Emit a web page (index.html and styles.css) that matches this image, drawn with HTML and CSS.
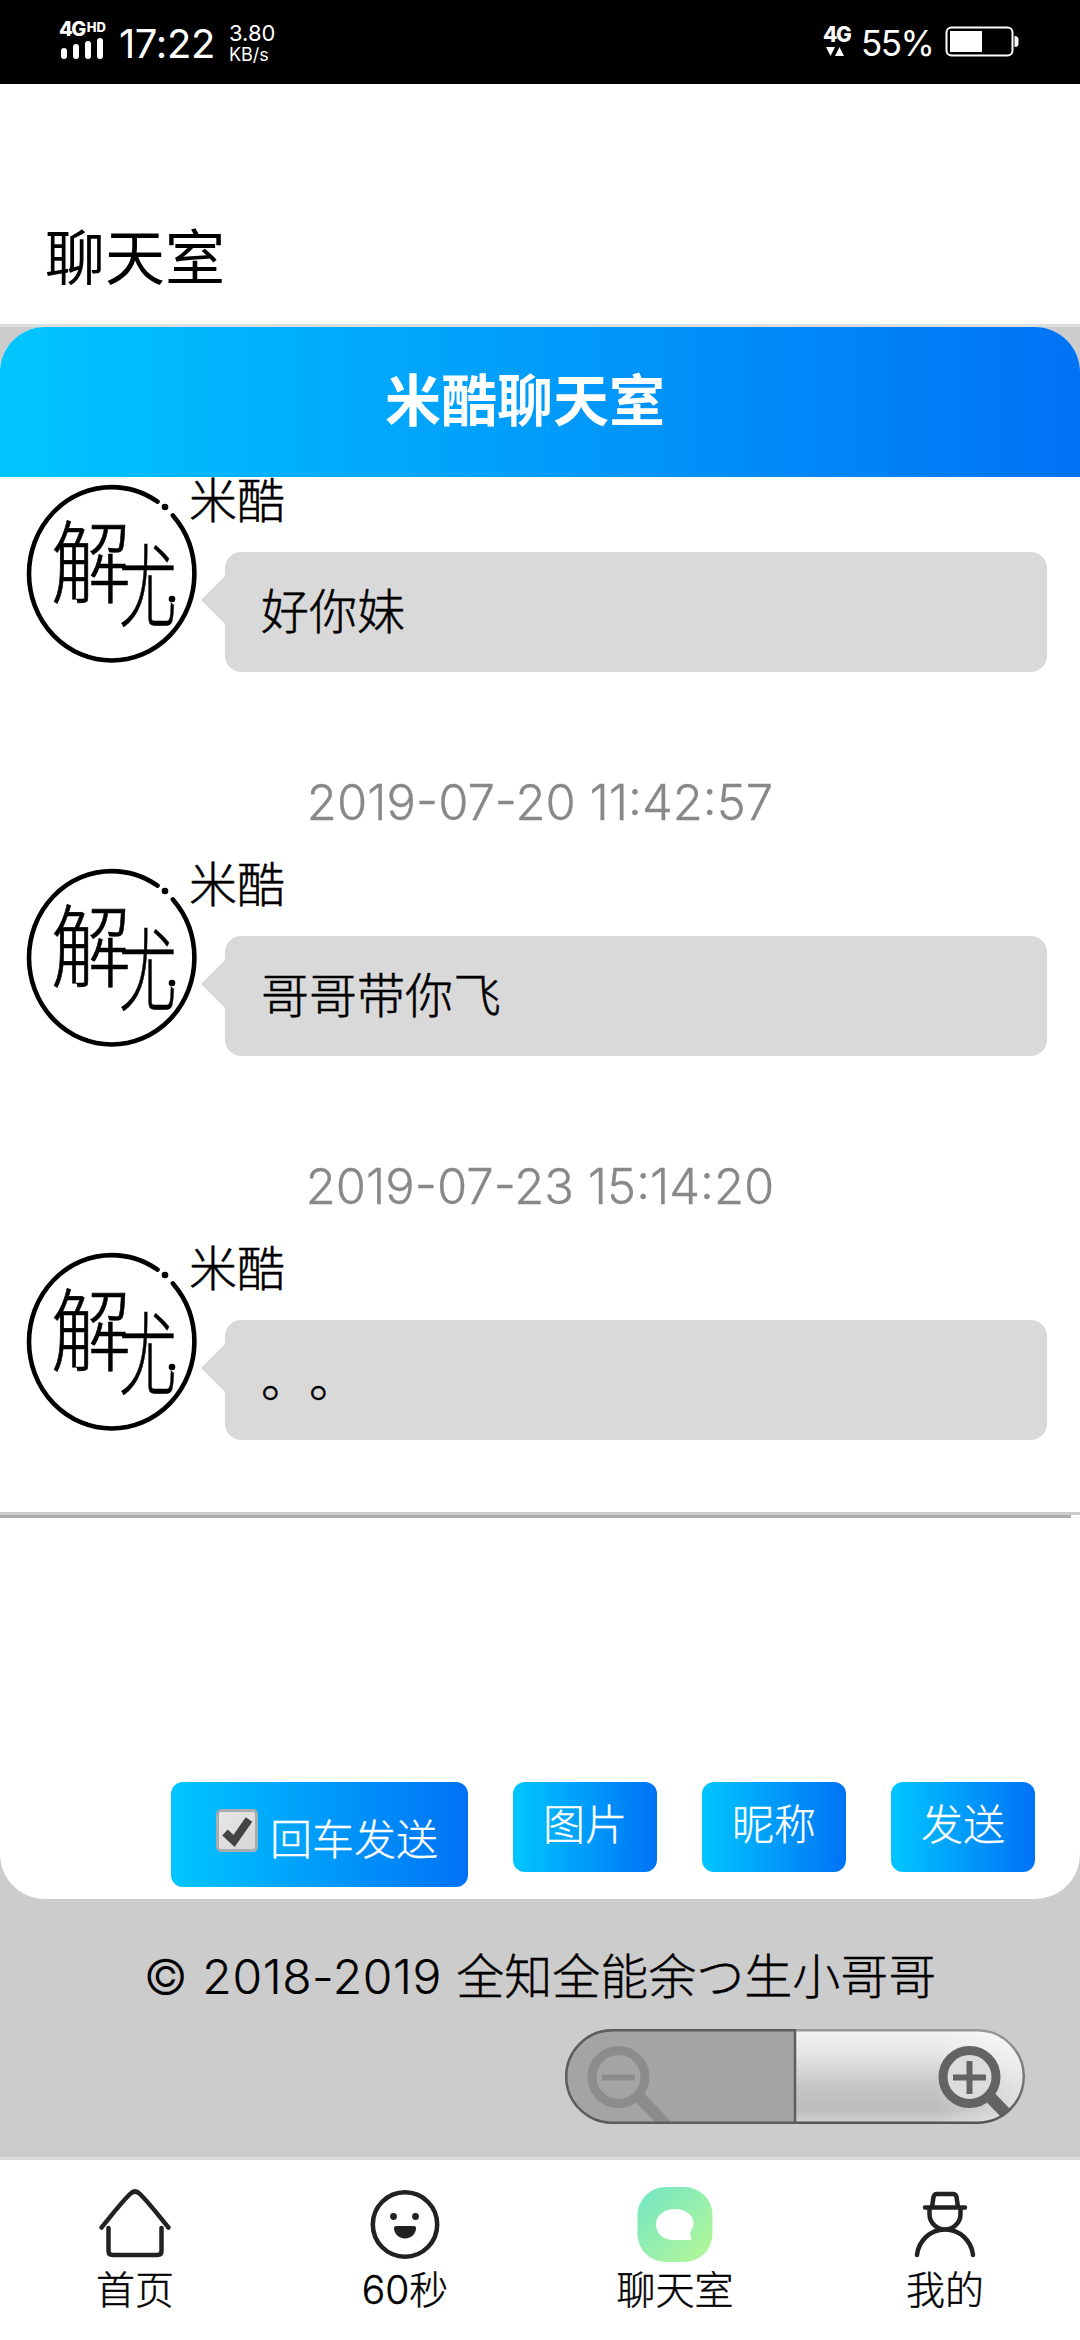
FILE: index.html
```html
<!DOCTYPE html>
<html lang="zh-CN">
<head>
<meta charset="utf-8">
<title>聊天室</title>
<link rel="stylesheet" href="styles.css">
</head>
<body>
<svg class="defs" width="0" height="0" aria-hidden="true">
  <defs>
    <symbol id="avatar" viewBox="0 0 174 180">
      <ellipse cx="86.700" cy="89.800" rx="82.700" ry="86.700" fill="none" stroke="#000" stroke-width="4.600" stroke-linecap="round" pathLength="360" stroke-dasharray="303 14 43 0"/>
      <circle cx="140" cy="23" r="3.300"/>
      <text class="avatar-text" transform="translate(26 112) scale(1 1.120)" font-size="80">解</text>
      <text class="avatar-text" transform="translate(94 136) scale(.72 1.130)" font-size="80">尤</text>
      <circle cx="147" cy="115" r="3.300"/>
    </symbol>
  </defs>
</svg>

<div class="status">
  <div class="signal">
    <div class="net">4G<span class="hd">HD</span></div>
    <svg width="44" height="21" viewBox="0 0 44 21"><g stroke="#fff" stroke-width="6" stroke-linecap="round"><path d="M5 13v5M17 9v9M29 6v12M41 3v15"/></g></svg>
  </div>
  <div class="clock">17:22</div>
  <div class="speed"><span>3.80</span><span class="unit">KB/s</span></div>
  <div class="status-right">
    <div class="data">
      <div class="net">4G</div>
      <svg width="20" height="10" viewBox="0 0 20 10" fill="#fff"><path d="M1 0h9L5.500 9zM10 9h9L14.500 0z"/></svg>
    </div>
    <div class="percent">55%</div>
    <svg width="74" height="32" viewBox="0 0 74 32"><rect x="1.500" y="1.500" width="66" height="28" rx="5" fill="none" stroke="#fff" stroke-width="2"/><rect x="5" y="5" width="32" height="21" fill="#fff"/><path d="M69.500 10q4 0 4 3v5q0 3-4 3z" fill="#fff"/></svg>
  </div>
</div>

<header class="page-head">聊天室</header>

<main class="page">
  <section class="room">
    <h1 class="room-title">米酷聊天室</h1>
    <div class="messages">
      <article class="message">
        <svg class="avatar"><use href="#avatar"/></svg>
        <div class="content"><div class="name">米酷</div><div class="bubble">好你妹</div></div>
      </article>
      <time class="date">2019-07-20 11:42:57</time>
      <article class="message">
        <svg class="avatar"><use href="#avatar"/></svg>
        <div class="content"><div class="name">米酷</div><div class="bubble">哥哥带你飞</div></div>
      </article>
      <time class="date">2019-07-23 15:14:20</time>
      <article class="message">
        <svg class="avatar"><use href="#avatar"/></svg>
        <div class="content"><div class="name">米酷</div><div class="bubble">。。</div></div>
      </article>
    </div>
    <div class="editor"></div>
    <div class="actions">
      <div class="button check">
        <svg width="42" height="43" viewBox="0 0 42 43"><defs><linearGradient id="box" x2="1" y2="1"><stop stop-color="#e8e8e8"/><stop offset="1" stop-color="#d8d4d4"/></linearGradient></defs><rect x="1.500" y="1.500" width="39" height="40" rx="4" fill="url(#box)" stroke="#a9adb0" stroke-width="3"/><path d="M9 23.500l9 8.500L33 10.500" fill="none" stroke="#444" stroke-width="8"/></svg>
        <span>回车发送</span>
      </div>
      <div class="button">图片</div>
      <div class="button">昵称</div>
      <div class="button">发送</div>
    </div>
  </section>
  <footer class="copyright"><span class="years">© 2018-2019 </span>全知全能余つ生小哥哥</footer>
  <svg class="zoom" width="466" height="102" viewBox="0 0 466 102">
    <defs>
      <linearGradient id="plate" x2="0" y2="1"><stop stop-color="#f4f4f4"/><stop offset=".3" stop-color="#e2e2e2"/><stop offset=".6" stop-color="#c6c6c6"/><stop offset=".85" stop-color="#bdbdbd"/><stop offset="1" stop-color="#d2d2d2"/></linearGradient>
      <linearGradient id="rim" x2="0" y2="1"><stop stop-color="#999"/><stop offset="1" stop-color="#555"/></linearGradient>
      <linearGradient id="gleam"><stop offset=".6" stop-color="#fff" stop-opacity="0"/><stop offset="1" stop-color="#fff" stop-opacity=".55"/></linearGradient>
      <clipPath id="capsule"><rect x="3" y="4" width="460" height="95" rx="47.500"/></clipPath>
    </defs>
    <g clip-path="url(#capsule)">
      <path d="M0 0h233v102H0z" fill="#a4a4a4"/>
      <path d="M233 4h233v95H233z" fill="url(#plate)"/>
      <path d="M233 4h233v95H233z" fill="url(#gleam)"/>
      <circle cx="407.500" cy="52" r="24" fill="#dcdcdc"/>
      <g fill="none" stroke="#8c8c8c"><circle cx="56.500" cy="52" r="26.500" stroke-width="9"/><path d="M40 52.500h33" stroke-width="6"/><path d="M77 72l30 31" stroke-width="12"/></g>
      <g fill="none" stroke="#636363"><circle cx="407.500" cy="52" r="26.500" stroke-width="9"/><path d="M391 52.500h33M407.500 36v33" stroke-width="6"/><path d="M428 72l30 31" stroke-width="12"/></g>
    </g>
    <path d="M233 5.200h182.500a46 46 0 0 1 0 92.600H233" fill="none" stroke="url(#rim)" stroke-width="2.500"/>
    <path d="M233 5.200H50.500a46 46 0 0 0 0 92.600H233z" fill="none" stroke="#5d5d5d" stroke-width="2.500"/>
  </svg>
</main>

<nav class="tabs">
  <div class="tab">
    <svg width="78" height="78" viewBox="0 0 78 78" fill="none" stroke="#222" stroke-width="4.500" stroke-linecap="round" stroke-linejoin="round"><path d="M5.500 42.500C15 31 24 19 34 9q5-5 10 0C54 19 63 31 72.500 42.500M12.500 43v23q0 4 4 4h45q4 0 4-4V43"/></svg>
    <span>首页</span>
  </div>
  <div class="tab">
    <svg width="78" height="78" viewBox="0 0 78 78"><circle cx="39" cy="39.500" r="32.200" fill="none" stroke="#222" stroke-width="4.500"/><g fill="#222"><circle cx="27.500" cy="31.500" r="3.400"/><circle cx="49.500" cy="31.500" r="3.400"/><path d="M30.500 41h17q3 0 2.500 3c-1 6-5.500 9.500-11 9.500S29 50 28 44q-.5-3 2.500-3z"/></g></svg>
    <span>60秒</span>
  </div>
  <div class="tab">
    <svg width="78" height="78" viewBox="0 0 78 78"><defs><linearGradient id="chat" x2="1" y2="1"><stop offset=".15" stop-color="#7ce8bf"/><stop offset="1" stop-color="#b7f894"/></linearGradient></defs><rect x="1.500" y="2" width="75" height="75" rx="28" fill="url(#chat)"/><path d="M39 24c11 0 18.500 6.500 18.500 14 0 4-1.500 7-3.500 9.500l1.500 7.500H37c-10 0-17-7-17-15.500C20 30.500 28 24 39 24z" fill="#fff"/></svg>
    <span>聊天室</span>
  </div>
  <div class="tab">
    <svg width="78" height="78" viewBox="0 0 78 78" fill="none" stroke="#222" stroke-width="4.500" stroke-linecap="round" stroke-linejoin="round"><path d="M19 22.500h40M26 22l1.500-10q.7-3 3.500-3h16q2.800 0 3.500 3L52 22M23.500 24v5a15.500 15.500 0 0 0 31 0v-5M11 70c1.500-14 13-25.500 28-25.500S65.500 56 67 70"/></svg>
    <span>我的</span>
  </div>
</nav>
</body>
</html>
```
FILE: styles.css
```css
* { box-sizing: border-box; }
body {
  margin: 0;
  width: 1080px;
  height: 2340px;
  display: flex;
  flex-direction: column;
  overflow: hidden;
  background: #fff;
  color: #000;
  font-family: Inter, "Noto Sans CJK SC", sans-serif;
  font-weight: 300;
  text-spacing-trim: space-all;
}
svg { display: block; flex: none; }
.defs { position: absolute; }

.status {
  height: 84px;
  flex: none;
  display: flex;
  align-items: flex-start;
  background: #000;
  color: #fff;
  padding: 0 61px 0 59px;
  white-space: nowrap;
}
.signal { width: 60px; padding-top: 21px; }
.net {
  font: 800 20px/17px Inter, sans-serif;
  letter-spacing: -1.500px;
  display: flex;
}
.hd { font-size: 13px; line-height: 12px; letter-spacing: 0; margin-left: 2px; }
.clock { width: 110px; font: 400 40px/48px Inter, sans-serif; padding-top: 20px; letter-spacing: -.400px; }
.speed { display: flex; flex-direction: column; padding-top: 21px; font: 400 22px/25px Inter, sans-serif; }
.unit { font-size: 18px; line-height: 18px; }
.status-right { margin-left: auto; display: flex; }
.data { width: 38px; padding-top: 26px; }
.data .net { font-size: 21px; }
.data svg { margin: 4px 0 0 2px; }
.percent { width: 84px; font: 400 35px/42px Inter, sans-serif; padding-top: 22px; letter-spacing: -1.500px; }
.status-right > svg { margin-top: 26px; }

.page-head {
  height: 243px;
  flex: none;
  padding: 129px 45px 0;
  border-bottom: 3px solid #dcdfe0;
  font-size: 60px;
  line-height: 90px;
  font-weight: 400;
}
.page { height: 1830px; flex: none; background: #ccc; display: flex; flex-direction: column; }
.room { height: 1572px; border-radius: 45px; overflow: hidden; background: #fff; display: flex; flex-direction: column; }
.room-title {
  margin: 0;
  height: 150px;
  flex: none;
  padding-right: 30px;
  background: linear-gradient(90deg, #00c6ff, #0072f5);
  color: #fff;
  text-align: center;
  font-size: 56px;
  line-height: 148px;
  font-weight: 700;
}
.messages { height: 1038px; flex: none; border-bottom: 3px solid #ccc; overflow: hidden; }
.message { display: flex; height: 195px; padding-left: 25px; }
.avatar { width: 174px; height: 180px; margin: 7px -2px 0 0; }
.avatar-text { font-family: "Noto Sans CJK SC", sans-serif; font-weight: 300; stroke: #000; stroke-width: .600px; }
.content { flex: 1; padding-right: 33px; }
.name { height: 75px; margin-left: -8px; font-size: 48px; line-height: 48px; -webkit-text-stroke: .500px; }
.bubble {
  position: relative;
  height: 120px;
  margin-left: 28px;
  padding-left: 36px;
  border-radius: 16px;
  background: #d9d9d9;
  font-size: 48px;
  line-height: 119px;
  -webkit-text-stroke: .500px;
}
.bubble::before {
  content: "";
  position: absolute;
  left: -24px;
  top: 24px;
  border: 24px solid transparent;
  border-left: 0;
  border-right-color: #d9d9d9;
}
.date { display: block; height: 189px; padding-top: 101px; text-align: center; color: #888; font-size: 49px; line-height: 60px; -webkit-text-stroke: .300px; }
.editor { width: 1071px; height: 267px; flex: none; border-top: 3px solid #aaa; }
.actions { display: flex; justify-content: flex-end; gap: 45px; padding-right: 45px; align-items: flex-start; }
.button {
  height: 90px;
  padding: 0 30px;
  border-radius: 12px;
  background: linear-gradient(90deg, #00c6ff, #0072f5);
  color: #fff;
  font-size: 42px;
  line-height: 86px;
  -webkit-text-stroke: .300px;
}
.check { width: 297px; height: 105px; padding: 0 0 0 45px; display: flex; gap: 12px; line-height: 116px; white-space: nowrap; }
.check svg { margin-top: 27px; }
.copyright { padding-top: 48px; text-align: center; font-size: 48px; line-height: 60px; -webkit-text-stroke: .400px; }
.years { letter-spacing: .600px; white-space: pre; -webkit-text-stroke: .200px; }
.zoom { margin: 18px 52px 0 auto; }

.tabs {
  flex: 1;
  display: grid;
  grid-template-columns: repeat(4, 1fr);
  border-top: 3px solid #dcdcdc;
  font-size: 39px;
  line-height: 48px;
}
.tab { display: flex; flex-direction: column; align-items: center; padding-top: 25px; }
.tab span { margin-top: 3px; -webkit-text-stroke: .400px; }
```
